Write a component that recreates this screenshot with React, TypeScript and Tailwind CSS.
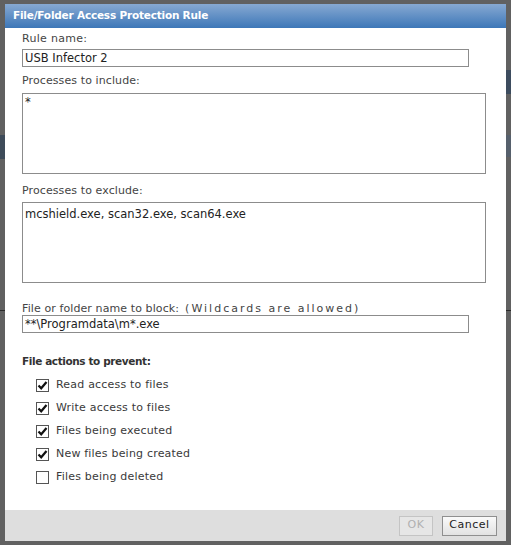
import { useState } from 'react'

const font = { fontFamily: '"DejaVu Sans", Verdana, Tahoma, sans-serif' }

interface ActionRowProps {
  label: string
  checked: boolean
  onToggle: () => void
}

function ActionRow({ label, checked, onToggle }: ActionRowProps) {
  return (
    <label className="flex items-center h-[23px] cursor-default" onClick={onToggle}>
      <span className="w-[13px] h-[13px] border border-[#555] bg-white flex items-center justify-center shrink-0">
        {checked && (
          <svg width="11" height="11" viewBox="0 0 11 11">
            <path d="M1.5 5.5 L4.2 8.3 L9.5 2" fill="none" stroke="#111" strokeWidth="2.2" />
          </svg>
        )}
      </span>
      <span className="ml-[7px] text-[11px] text-[#3a3a3a] tracking-[0.2px]">{label}</span>
    </label>
  )
}

export default function App() {
  const [actions, setActions] = useState([
    { label: 'Read access to files', checked: true },
    { label: 'Write access to files', checked: true },
    { label: 'Files being executed', checked: true },
    { label: 'New files being created', checked: true },
    { label: 'Files being deleted', checked: false }
  ])

  const toggle = (i: number) =>
    setActions((prev) => prev.map((a, j) => (j === i ? { ...a, checked: !a.checked } : a)))

  return (
    <div className="relative w-[511px] h-[545px] bg-[#616161] overflow-hidden" style={font}>
      {/* dimmed page behind the dialog */}
      <div className="absolute left-0 top-[135px] w-[5px] h-[24px] bg-[#3e4b59]" />
      <div className="absolute left-0 top-[310px] w-[5px] h-px bg-[#2a2a2a]" />
      <div className="absolute right-0 top-[70px] w-[5px] h-[24px] bg-[#3d4c5e]" />
      <div className="absolute right-0 top-[135px] w-[5px] h-[22px] bg-[#56606c]" />
      <div className="absolute right-0 top-[310px] w-[5px] h-px bg-[#2a2a2a]" />

      <div className="absolute left-[5px] top-[4px] w-[501px] h-[537px] flex flex-col bg-white">
        <div className="h-[24px] shrink-0 flex items-center pl-[8px] bg-[linear-gradient(#87a9d2,#3d77b8)]">
          <h1 className="m-0 text-[10.5px] font-bold text-white tracking-[-0.2px]">
            File/Folder Access Protection Rule
          </h1>
        </div>

        <div className="flex-1 flex flex-col pl-[17px] pt-[2px]">
          <span className="text-[11px] text-[#444] h-[17px] leading-[17px] tracking-[0.3px]">Rule name:</span>
          <div className="mt-[2px] w-[447px] h-[18px] border border-[#8c8c8c] px-[2px] text-[11.5px] leading-[16px] text-[#222]">
            USB Infector 2
          </div>

          <span className="mt-[5px] text-[11px] text-[#444] h-[17px] leading-[17px] tracking-[0.1px]">
            Processes to include:
          </span>
          <div className="mt-[4px] w-[464px] h-[81px] border border-[#8c8c8c] px-[2px] pt-[1px] text-[11.5px] leading-[15px] text-[#222]">
            *
          </div>

          <span className="mt-[8px] text-[11px] text-[#444] h-[17px] leading-[17px] tracking-[0.1px]">
            Processes to exclude:
          </span>
          <div className="mt-[3px] w-[464px] h-[81px] border border-[#8c8c8c] px-[2px] pt-[4px] text-[11.5px] leading-[15px] text-[#222]">
            mcshield.exe, scan32.exe, scan64.exe
          </div>

          <span className="mt-[17px] text-[11px] text-[#444] h-[15px] leading-[18px] tracking-[0.1px] whitespace-nowrap">
            File or folder name to block:
            <span className="ml-[6px] tracking-[2px]">(Wildcards are allowed)</span>
          </span>
          <div className="w-[447px] h-[18px] border border-[#8c8c8c] px-[2px] text-[11.5px] leading-[16px] text-[#222]">
            **\Programdata\m*.exe
          </div>

          <span className="mt-[21px] text-[10.5px] font-bold text-[#333] h-[15px] leading-[15px] tracking-[-0.4px]">
            File actions to prevent:
          </span>
          <div className="mt-[5px] pl-[14px] flex flex-col">
            {actions.map((a, i) => (
              <ActionRow key={a.label} label={a.label} checked={a.checked} onToggle={() => toggle(i)} />
            ))}
          </div>
        </div>

        <div className="h-[31px] shrink-0 bg-[#dedede] flex items-center justify-end gap-[9px] pr-[9px]">
          <button
            type="button"
            disabled
            className="w-[34px] h-[20px] border border-[#c4c4c4] bg-[#e6e6e6] text-[11px] text-[#b0b0b0] tracking-[0.5px]"
          >
            OK
          </button>
          <button
            type="button"
            className="w-[55px] h-[20px] border border-[#8f8f8f] bg-[linear-gradient(#fafafa,#e2e2e2)] text-[11px] text-[#222] tracking-[0.5px]"
          >
            Cancel
          </button>
        </div>
      </div>
    </div>
  )
}
